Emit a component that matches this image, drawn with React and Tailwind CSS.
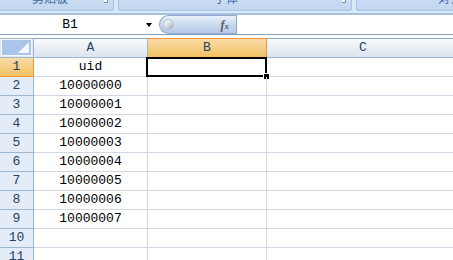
import React from "react";

const cellFont = { fontFamily: '"Liberation Mono", "Noto Sans CJK SC", monospace' };

const rows = [
  "uid",
  "10000000",
  "10000001",
  "10000002",
  "10000003",
  "10000004",
  "10000005",
  "10000006",
  "10000007",
  "",
  "",
];

const RibbonGroup = ({ label, className, pad, launcher }) => (
  <div
    className={`relative h-[11px] overflow-hidden rounded-b-[3px] border-x border-b border-[#a7c4e6] bg-gradient-to-b from-[#c9dcf2] to-[#c1d6ef] ${className}`}
  >
    <div
      className={`-mt-[10px] flex h-[15px] items-center whitespace-nowrap text-[12px] text-[#3e6aa6] ${pad}`}
      style={{ fontFamily: '"Noto Sans CJK SC", sans-serif' }}
    >
      {label}
    </div>
    {launcher && (
      <div className="absolute right-[5px] top-0 h-[3px] w-[4px] border-b border-r border-[#6d8fbd] bg-white" />
    )}
  </div>
);

const App = () => {
  return (
    <div className="w-[453px] h-[260px] overflow-hidden bg-white select-none">
      {/* Ribbon bottom edge */}
      <div className="flex h-[11px] gap-[4px] bg-[#dbe7f5]">
        <RibbonGroup label="剪贴板" className="w-[115px] -ml-[1px] shrink-0" pad="pl-[32px]" launcher />
        <RibbonGroup label="字体" className="w-[234px] shrink-0" pad="pl-[95px]" launcher />
        <RibbonGroup label="对齐" className="w-[120px] shrink-0" pad="pl-[81px]" />
      </div>
      <div className="h-[2px] bg-[#d3ecfb]" />
      <div className="h-[2px] bg-[#a9c0dc]" />

      {/* Formula bar */}
      <div className="flex h-[19px] bg-white">
        <div className="relative flex w-[159px] items-center">
          <span className="w-[140px] text-center text-[13px] text-black" style={cellFont}>
            B1
          </span>
          <svg className="absolute left-[146px] top-[8px]" width="6" height="4" viewBox="0 0 6 4">
            <path d="M0 0 H6 L3 4 Z" fill="#000" />
          </svg>
        </div>
        <div className="relative flex w-[77px] items-center justify-end rounded-l-full border border-r-0 border-[#8ea9cf] bg-gradient-to-b from-[#eaf1fa] via-[#c9d9ee] to-[#b4c9e6] pr-[7px]">
          <div className="absolute left-[3px] top-[3px] h-[11px] w-[11px] rounded-full border border-[#b8c2ce] bg-gradient-to-br from-[#ffffff] via-[#d9dde3] to-[#9aa4b0]" />
          <span className="text-[12px] italic font-bold text-[#5a5a5a]" style={{ fontFamily: '"Liberation Serif", serif' }}>
            f<span className="text-[9px]">x</span>
          </span>
        </div>
        <div className="flex-1 border-l border-[#8ea9cf] bg-white" />
      </div>
      <div className="h-px bg-[#8aa2c2]" />
      <div className="h-[3px] bg-white" />

      {/* Grid */}
      <div className="grid grid-cols-[34px_114px_119px_192px]" style={cellFont}>
        {/* Header row */}
        <div className="flex h-[20px] items-end border-t border-b border-r border-[#9eb6ce] bg-[#dfe8f5]">
          <div className="relative m-[1px] h-[17px] w-[31px] border border-[#f4f8fd] bg-[#abc5ea]">
            <svg className="absolute right-[2px] bottom-[2px]" width="11" height="11" viewBox="0 0 11 11">
              <path d="M11 0 V11 H0 Z" fill="#f4f7fb" />
            </svg>
          </div>
        </div>
        <div className="flex h-[20px] items-center justify-center border-t border-b border-r border-[#9eb6ce] border-t-[#8aa8cc] bg-gradient-to-b from-[#f8fafd] to-[#dce4ef] text-[13px] text-[#27415f]">
          A
        </div>
        <div className="flex h-[20px] items-center justify-center border-t border-b border-r border-[#f29536] bg-gradient-to-b from-[#f9dba7] to-[#f1c15f] text-[13px] text-[#27415f]">
          B
        </div>
        <div className="flex h-[20px] items-center justify-center border-t border-b border-[#9eb6ce] border-t-[#8aa8cc] bg-gradient-to-b from-[#f8fafd] to-[#dce4ef] text-[13px] text-[#27415f]">
          C
        </div>

        {rows.map((val, i) => (
          <React.Fragment key={i}>
            <div
              className={`flex h-[19px] items-center justify-center border-r border-b text-[13px] text-[#27415f] ${
                i === 0
                  ? "border-[#f29536] bg-gradient-to-b from-[#f9dba7] to-[#f1c15f]"
                  : "border-[#9eb6ce] bg-[#e4ecf7]"
              }`}
            >
              {i + 1}
            </div>
            <div className="flex h-[19px] items-center justify-center border-r border-b border-[#d0d7e5] text-[13px] text-black">
              {val}
            </div>
            <div className="relative h-[19px] border-r border-b border-[#d0d7e5]">
              {i === 0 && (
                <>
                  <div className="absolute -left-[2px] -top-[1px] h-[20px] w-[121px] border-2 border-black" />
                  <div className="absolute -right-[4px] -bottom-[4px] h-[7px] w-[7px] border border-white bg-black" />
                </>
              )}
            </div>
            <div className="h-[19px] border-b border-[#d0d7e5]" />
          </React.Fragment>
        ))}
      </div>
    </div>
  );
};

export default App;
